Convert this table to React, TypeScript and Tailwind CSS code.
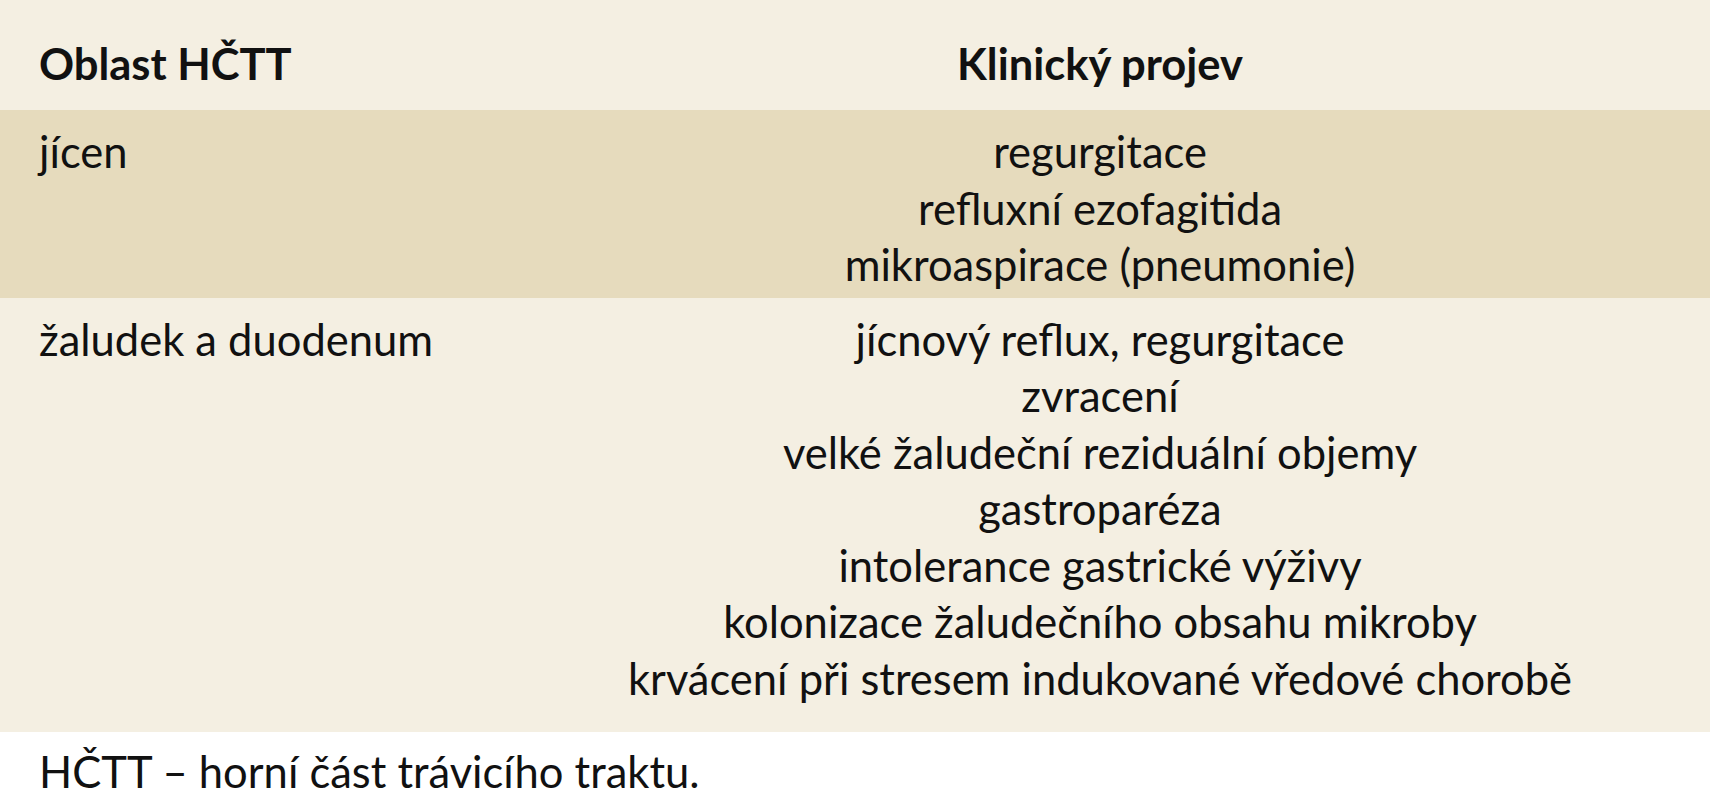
const rows = [
  {
    area: 'jícen',
    rowClass: 'bg-[#e6dbbd] pt-[13px] pb-[5px]',
    items: ['regurgitace', 'refluxní ezofagitida', 'mikroaspirace (pneumonie)'],
  },
  {
    area: 'žaludek a duodenum',
    rowClass: 'bg-[#f4efe2] pt-[13px] pb-[26px]',
    items: [
      'jícnový reflux, regurgitace',
      'zvracení',
      'velké žaludeční reziduální objemy',
      'gastroparéza',
      'intolerance gastrické výživy',
      'kolonizace žaludečního obsahu mikroby',
      'krvácení při stresem indukované vředové chorobě',
    ],
  },
]

export default function App() {
  return (
    <div className="w-[1710px] h-[800px] bg-white text-[#111] font-['Lato','Open_Sans',sans-serif] text-[43.5px] leading-[56.5px] overflow-hidden">
      <div className="bg-[#f4efe2]">
        {/* Header */}
        <div className="grid grid-cols-[490px_1fr] h-[110px] pt-[35px] font-bold">
          <div className="pl-[39px]">Oblast HČTT</div>
          <div className="text-center">Klinický projev</div>
        </div>

        {rows.map((row) => (
          <div key={row.area} className={`grid grid-cols-[490px_1fr] ${row.rowClass}`}>
            <div className="pl-[39px]">{row.area}</div>
            <div className="text-center">
              {row.items.map((item) => (
                <div key={item}>{item}</div>
              ))}
            </div>
          </div>
        ))}
      </div>

      {/* Footnote */}
      <div className="pl-[39px] pt-[11px]">HČTT – horní část trávicího traktu.</div>
    </div>
  )
}
